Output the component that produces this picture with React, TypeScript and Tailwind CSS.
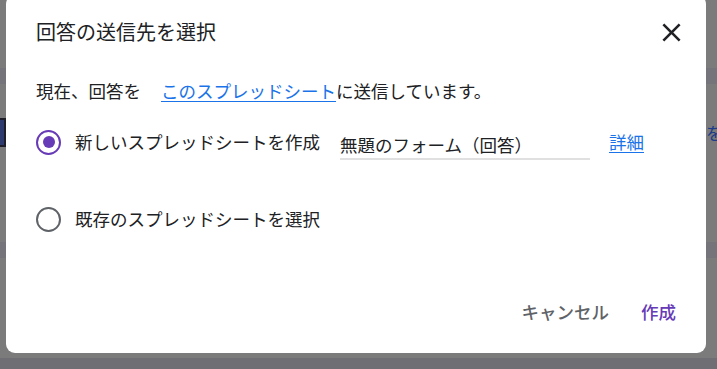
import React, { useState } from 'react'

const font = '"Noto Sans CJK JP", "Noto Sans", sans-serif'

function Radio({ checked }: { checked: boolean }) {
  return (
    <span
      className={
        'flex h-[25px] w-[25px] shrink-0 items-center justify-center rounded-full border-[2.5px] ' +
        (checked ? 'border-[#673ab7]' : 'border-[#5f6368]')
      }
    >
      {checked && <span className="h-[12px] w-[12px] rounded-full bg-[#673ab7]" />}
    </span>
  )
}

export default function App() {
  const [choice, setChoice] = useState<'new' | 'existing'>('new')

  return (
    <div className="relative h-[369px] w-[717px] overflow-hidden bg-[#7b7b7b]" style={{ fontFamily: font }}>
      {/* page behind the scrim */}
      <div className="flex flex-col">
        <div className="h-[68px]" />
        <div className="h-[16px] bg-[#75747b]" />
        <div className="h-[34px]" />
        <div className="flex h-[124px] items-start justify-between">
          <div className="h-[29px] w-[6px] border-y-2 border-r-2 border-[#1e1e2a] bg-[#2c3a6e]" />
          <span className="mr-[-40px] mt-[5px] whitespace-nowrap text-[17px] leading-[20px] text-[#1a3c8a]">を表示</span>
        </div>
        <div className="h-[16px] bg-[#75747b]" />
        <div className="h-[100px]" />
        <div className="h-[11px] bg-[#6f6e75]" />
      </div>

      {/* dialog */}
      <div className="absolute left-[6px] top-[-5px] flex h-[358px] w-[700px] flex-col rounded-[9px] bg-white text-[#202124]">
        <div className="mt-[21px] flex h-[32px] items-center justify-between pl-[30px] pr-[19px]">
          <h2 className="text-[20px] font-normal leading-[28px]">回答の送信先を選択</h2>
          <button className="flex h-[31px] w-[31px] items-center justify-center">
            <svg viewBox="0 0 24 24" className="h-[31px] w-[31px]" fill="#202124">
              <path d="M19 6.41L17.59 5 12 10.59 6.41 5 5 6.41 10.59 12 5 17.59 6.41 19 12 13.41 17.59 19 19 17.59 13.41 12z" />
            </svg>
          </button>
        </div>

        <p className="mt-[30px] pl-[30px] text-[17.5px] leading-[26px]">
          現在、回答を
          <a className="ml-[20px] text-[#1a73e8] underline underline-offset-[3px]" href="#">
            このスプレッドシート
          </a>
          に送信しています。
        </p>

        <div className="mt-[18px] flex flex-col gap-[37px] pl-[30px]">
          <label className="flex h-[40px] items-center" onClick={() => setChoice('new')}>
            <Radio checked={choice === 'new'} />
            <span className="ml-[14px] text-[17.5px] leading-[26px]">新しいスプレッドシートを作成</span>
            <span className="ml-[20px] mt-[8px] block w-[250px] border-b-2 border-[#e0e0e0] text-[17.5px] leading-[26px]">
              無題のフォーム（回答）
            </span>
            <a className="ml-[19px] text-[17.5px] leading-[26px] text-[#1a73e8] underline underline-offset-[3px]" href="#">
              詳細
            </a>
          </label>
          <label className="flex h-[40px] items-center" onClick={() => setChoice('existing')}>
            <Radio checked={choice === 'existing'} />
            <span className="ml-[14px] text-[17.5px] leading-[26px]">既存のスプレッドシートを選択</span>
          </label>
        </div>

        <div className="mb-[23px] mt-auto flex h-[36px] items-center justify-end gap-[32px] pr-[30px]">
          <button className="text-[17.5px] font-medium leading-[26px] text-[#5f6368]">キャンセル</button>
          <button className="text-[17.5px] font-medium leading-[26px] text-[#673ab7]">作成</button>
        </div>
      </div>
    </div>
  )
}
